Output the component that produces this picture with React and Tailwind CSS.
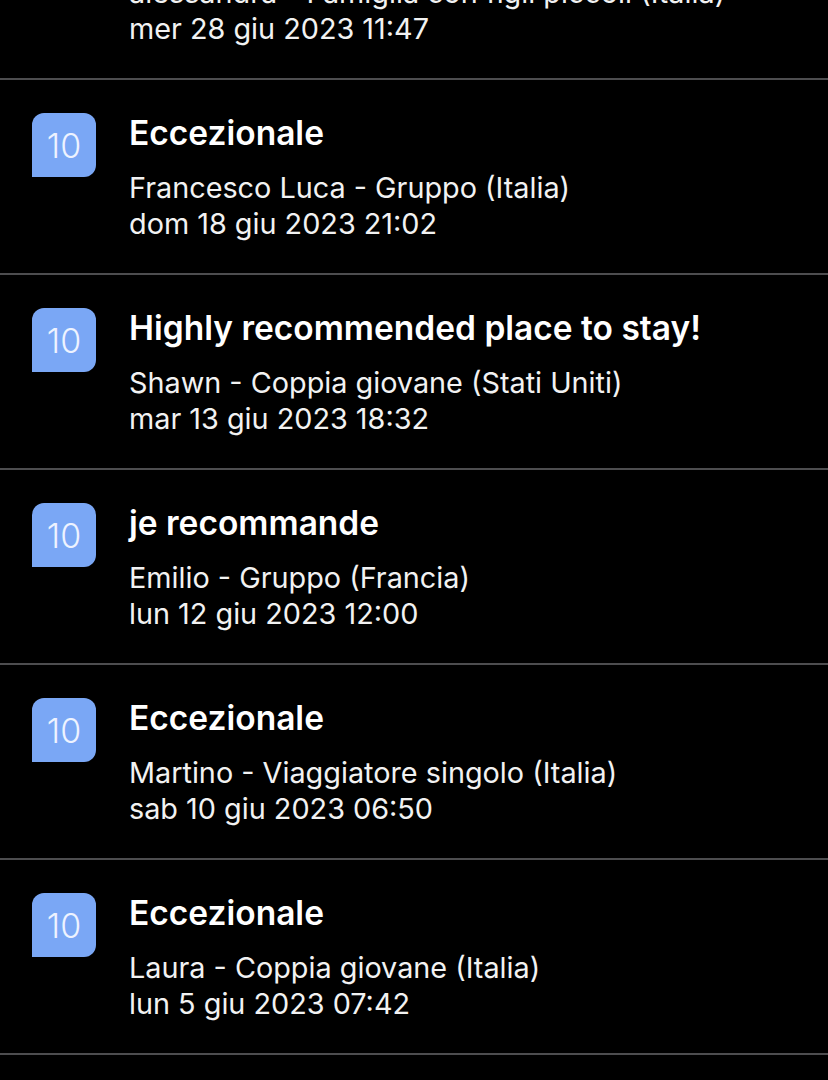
import React from "react";

const reviews = [
  { title: "Eccezionale", author: "alessandra - Famiglia con figli piccoli (Italia)", date: "mer 28 giu 2023 11:47" },
  { title: "Eccezionale", author: "Francesco Luca - Gruppo (Italia)", date: "dom 18 giu 2023 21:02" },
  { title: "Highly recommended place to stay!", author: "Shawn - Coppia giovane (Stati Uniti)", date: "mar 13 giu 2023 18:32" },
  { title: "je recommande", author: "Emilio - Gruppo (Francia)", date: "lun 12 giu 2023 12:00" },
  { title: "Eccezionale", author: "Martino - Viaggiatore singolo (Italia)", date: "sab 10 giu 2023 06:50" },
  { title: "Eccezionale", author: "Laura - Coppia giovane (Italia)", date: "lun 5 giu 2023 07:42" },
  { title: "Eccezionale", author: "Giulia - Coppia (Italia)", date: "gio 1 giu 2023 09:15" },
];

const ReviewRow = ({ review }) => (
  <div className="flex items-start h-[195px] pt-[33px] border-b-2 border-[#4d4d4f]">
    {/* score badge */}
    <div className="ml-[32px] w-[64px] h-[64px] shrink-0 flex items-center justify-center bg-[#7aa7f5] rounded-[12px] rounded-bl-none text-[34px] font-light text-[#eef3ff]">
      10
    </div>
    <div className="ml-[33px] pt-[2px] text-white whitespace-nowrap">
      <div className="text-[33.5px] leading-[36px] font-semibold">{review.title}</div>
      <div className="mt-[19px] text-[28.8px] leading-[36px] text-[#f2f2f2]">
        <div>{review.author}</div>
        <div>{review.date}</div>
      </div>
    </div>
  </div>
);

const App = () => {
  return (
    <div
      className="w-[828px] h-[1080px] overflow-hidden bg-black"
      style={{ fontFamily: "Inter, 'Noto Sans', sans-serif" }}
    >
      <div className="-mt-[115px]">
        {reviews.map((r, i) => (
          <ReviewRow key={i} review={r} />
        ))}
      </div>
    </div>
  );
};

export default App;
